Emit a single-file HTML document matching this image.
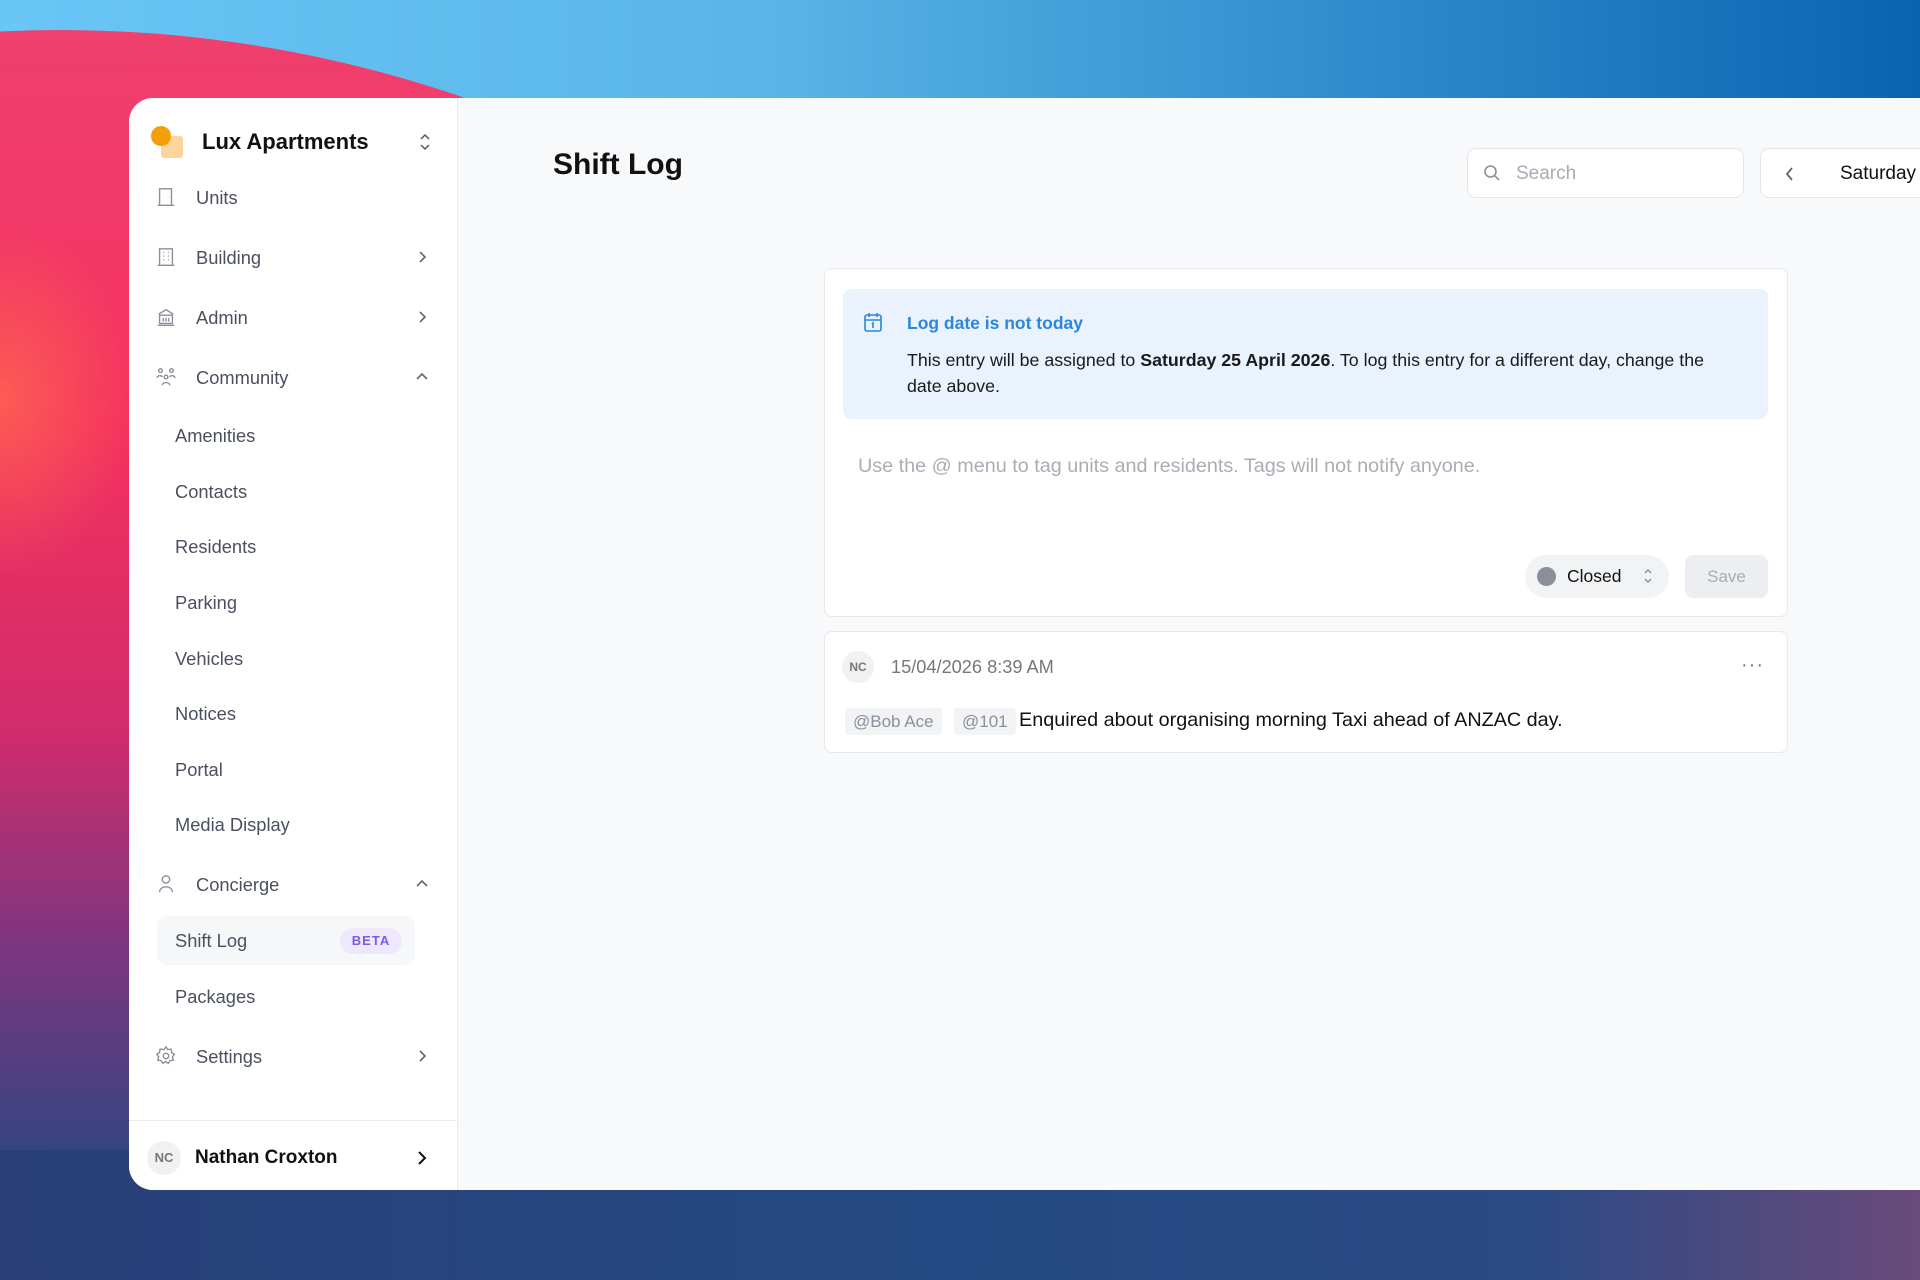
<!DOCTYPE html>
<html><head><meta charset="utf-8"><style>
*{box-sizing:border-box;margin:0;padding:0}
html,body{width:1920px;height:1280px;overflow:hidden}
body{position:relative;font-family:"Liberation Sans",sans-serif;background:#5ab4e8}
.bg{position:absolute;left:0;top:0;width:1920px;height:1280px;display:block}
.win{position:absolute;left:129px;top:98px;width:1791px;height:1092px;background:#f8f9fb;border-radius:24px 0 0 24px;overflow:hidden}
.side{position:absolute;left:0;top:0;width:329px;height:100%;background:#fff;border-right:1px solid #e8eaee}
.logo1{position:absolute;left:22px;top:28px;width:20px;height:20px;border-radius:50%;background:#f59e0b;z-index:2}
.logo2{position:absolute;left:32px;top:38px;width:22px;height:22px;border-radius:3px;background:#fdd49a}
.brand{position:absolute;left:73px;top:31px;font-size:22px;font-weight:600;color:#111}
.item{position:absolute;left:0;font-size:18.3px;color:#4b5060;line-height:20px}
.item .t{position:absolute;left:67px;top:1px;white-space:nowrap}
.sub .t{left:46px}
.ic{position:absolute;left:26px;top:-1px;width:22px;height:22px}
.chev{position:absolute;left:284px;top:0;width:18px;height:20px}
.hl{position:absolute;left:28px;top:818px;width:258px;height:49px;background:#f6f7f9;border-radius:10px}
.beta{position:absolute;left:211px;top:830px;width:62px;height:26px;border-radius:13px;background:#ede8fd;color:#7c5ce6;font-size:13px;font-weight:700;letter-spacing:1px;text-align:center;line-height:26px}
.foot{position:absolute;left:0;top:1022px;width:329px;border-top:1px solid #ececef}
.av{position:absolute;border-radius:50%;background:#f1f1f3;color:#777;font-weight:700;text-align:center}
.title{position:absolute;left:424px;top:50px;font-size:30px;font-weight:700;color:#111}
.search{position:absolute;left:1338px;top:50px;width:277px;height:50px;background:#fff;border:1px solid #e3e5e9;border-radius:9px}
.search span{position:absolute;left:48px;top:14px;font-size:19px;color:#a6abb5}
.date{position:absolute;left:1631px;top:50px;width:160px;height:50px;background:#fff;border:1px solid #e3e5e9;border-right:none;border-radius:9px 0 0 9px;overflow:hidden}
.date span{position:absolute;left:79px;top:14px;font-size:19px;color:#111;white-space:nowrap}
.card{position:absolute;left:695px;width:964px;background:#fff;border:1px solid #e6e8ec;border-radius:8px}
.alert{position:absolute;left:18px;top:20px;width:925px;height:130px;background:#eaf2fd;border-radius:8px}
.atitle{position:absolute;left:64px;top:24px;font-size:17.5px;font-weight:700;color:#2a86de}
.abody{position:absolute;left:64px;top:58px;width:830px;font-size:17.8px;line-height:26px;color:#1a1a1a}
.ph{position:absolute;left:33px;top:186px;font-size:19.8px;color:#a9adb5}
.closed{position:absolute;left:700px;top:286px;width:144px;height:43px;border-radius:22px;background:#f2f3f5}
.save{position:absolute;left:860px;top:286px;width:83px;height:43px;border-radius:8px;background:#eceef1;color:#a9adb5;font-size:17px;text-align:center;line-height:43px}
.tag{position:absolute;top:76px;height:27px;background:#f2f3f5;border-radius:4px;color:#8a8f99;font-size:17px;line-height:27px;padding:0 8px}
</style></head><body>
<svg class="bg" width="1920" height="1280" viewBox="0 0 1920 1280">
 <defs>
  <linearGradient id="sky" x1="0" y1="0" x2="1" y2="0"><stop offset="0" stop-color="#6ac6f7"/><stop offset=".4" stop-color="#5ab4e8"/><stop offset=".75" stop-color="#2a86c8"/><stop offset="1" stop-color="#0b63b0"/></linearGradient>
  <linearGradient id="pk" x1="0" y1="0" x2="0" y2="1"><stop offset="0" stop-color="#f0406e"/><stop offset=".18" stop-color="#f5305e"/><stop offset=".32" stop-color="#d02c6c"/><stop offset=".42" stop-color="#7a3680"/><stop offset=".52" stop-color="#2e4680"/></linearGradient>
  <radialGradient id="gl"><stop offset="0" stop-color="#ff6e50" stop-opacity=".7"/><stop offset=".7" stop-color="#ff6e50" stop-opacity="0"/></radialGradient>
  <linearGradient id="bt" x1="0" y1="0" x2="1" y2="0"><stop offset="0" stop-color="#2a3f78"/><stop offset=".5" stop-color="#234a82"/><stop offset=".8" stop-color="#2c4a84"/><stop offset="1" stop-color="#6a4a7a"/></linearGradient>
 </defs>
 <rect width="1920" height="1280" fill="url(#sky)"/>
 <ellipse cx="60" cy="1130" rx="1170" ry="1100" fill="url(#pk)"/>
 <ellipse cx="0" cy="400" rx="200" ry="250" fill="url(#gl)"/>
 <rect x="0" y="1150" width="1920" height="130" fill="url(#bt)"/>
</svg>
<div class="win">
 <div class="side">
  <div class="logo1"></div><div class="logo2"></div>
  <div class="brand">Lux Apartments</div>
  <svg style="position:absolute;left:290px;top:35px" width="12" height="18" viewBox="0 0 12 18" fill="none" stroke="#555" stroke-width="1.5"><path d="M2 6l4-4 4 4M2 12l4 4 4-4"/></svg>

  <div class="item" style="top:89px"><svg class="ic" viewBox="0 0 24 24" fill="none" stroke="#8a8f99" stroke-width="1.5"><path d="M5 21V3h13v18M3 21h18M14 12h.5"/></svg><span class="t">Units</span></div>
  <div class="item" style="top:149px"><svg class="ic" viewBox="0 0 24 24" fill="none" stroke="#8a8f99" stroke-width="1.5"><path d="M5 21V3h14v18M3 21h18M9 7h1M14 7h1M9 11h1M14 11h1M9 15h1M14 15h1"/></svg><span class="t">Building</span><svg class="chev" viewBox="0 0 18 20" fill="none" stroke="#666" stroke-width="1.6"><path d="M7 5l5 5-5 5"/></svg></div>
  <div class="item" style="top:209px"><svg class="ic" viewBox="0 0 24 24" fill="none" stroke="#8a8f99" stroke-width="1.5"><path d="M3 21h18M4 9l8-5 8 5M5 10h14v9H5zM9 13v4M12 13v4M15 13v4"/></svg><span class="t">Admin</span><svg class="chev" viewBox="0 0 18 20" fill="none" stroke="#666" stroke-width="1.6"><path d="M7 5l5 5-5 5"/></svg></div>
  <div class="item" style="top:269px"><svg class="ic" viewBox="0 0 24 24" fill="none" stroke="#8a8f99" stroke-width="1.5"><circle cx="6" cy="5" r="2"/><circle cx="18" cy="5" r="2"/><circle cx="12" cy="12" r="2"/><path d="M2 13c1-3 5-3 6-1M22 13c-1-3-5-3-6-1M8 21c0-4 8-4 8 0"/></svg><span class="t">Community</span><svg class="chev" viewBox="0 0 18 20" fill="none" stroke="#666" stroke-width="1.6"><path d="M4 12l5-5 5 5"/></svg></div>
  <div class="item sub" style="top:327px"><span class="t">Amenities</span></div>
  <div class="item sub" style="top:383px"><span class="t">Contacts</span></div>
  <div class="item sub" style="top:438px"><span class="t">Residents</span></div>
  <div class="item sub" style="top:494px"><span class="t">Parking</span></div>
  <div class="item sub" style="top:550px"><span class="t">Vehicles</span></div>
  <div class="item sub" style="top:605px"><span class="t">Notices</span></div>
  <div class="item sub" style="top:661px"><span class="t">Portal</span></div>
  <div class="item sub" style="top:716px"><span class="t">Media Display</span></div>
  <div class="item" style="top:776px"><svg class="ic" viewBox="0 0 24 24" fill="none" stroke="#8a8f99" stroke-width="1.5"><circle cx="12" cy="7" r="4"/><path d="M5 21c0-8 14-8 14 0"/></svg><span class="t">Concierge</span><svg class="chev" viewBox="0 0 18 20" fill="none" stroke="#666" stroke-width="1.6"><path d="M4 12l5-5 5 5"/></svg></div>
  <div class="hl"></div>
  <div class="item sub" style="top:832px"><span class="t">Shift Log</span></div>
  <div class="beta">BETA</div>
  <div class="item sub" style="top:888px"><span class="t">Packages</span></div>
  <div class="item" style="top:948px"><svg class="ic" viewBox="0 0 24 24" fill="none" stroke="#8a8f99" stroke-width="1.5"><circle cx="12" cy="12" r="3"/><path d="M12 2l2 3 3.5-.5.5 3.5 3 2-2 3 1 3.5-3.5.5-2 3-3-2-3 2-2-3-3.5-.5 1-3.5-2-3 3-2 .5-3.5L10 5z"/></svg><span class="t">Settings</span><svg class="chev" viewBox="0 0 18 20" fill="none" stroke="#666" stroke-width="1.6"><path d="M7 5l5 5-5 5"/></svg></div>
  <div class="foot"></div>
  <div class="av" style="left:18px;top:1043px;width:34px;height:34px;line-height:34px;font-size:13px">NC</div>
  <div style="position:absolute;left:66px;top:1049px;font-size:19px;font-weight:600;color:#111">Nathan Croxton</div>
  <svg style="position:absolute;left:286px;top:1050px" width="14" height="20" viewBox="0 0 14 20" fill="none" stroke="#111" stroke-width="2"><path d="M4 4l6 6-6 6"/></svg>
 </div>

 <div class="title">Shift Log</div>
 <div class="search"><svg style="position:absolute;left:15px;top:15px" width="18" height="18" viewBox="0 0 18 18" fill="none" stroke="#8a8f99" stroke-width="1.6"><circle cx="7.5" cy="7.5" r="5.5"/><path d="M12 12l4 4"/></svg><span>Search</span></div>
 <div class="date"><svg style="position:absolute;left:22px;top:15px" width="14" height="20" viewBox="0 0 14 20" fill="none" stroke="#666" stroke-width="1.8"><path d="M9 4l-5 6 5 6"/></svg><span>Saturday</span></div>

 <div class="card" style="top:170px;height:349px">
  <div class="alert">
   <svg style="position:absolute;left:20px;top:22px" width="20" height="22" viewBox="0 0 20 22" fill="none" stroke="#2a86de" stroke-width="1.6"><rect x="2" y="4" width="16" height="16" rx="2"/><path d="M2 9h16M6 2v4M14 2v4M9 13l1-1v5"/></svg>
   <div class="atitle">Log date is not today</div>
   <div class="abody">This entry will be assigned to <b>Saturday 25 April 2026</b>. To log this entry for a different day, change the date above.</div>
  </div>
  <div class="ph">Use the @ menu to tag units and residents. Tags will not notify anyone.</div>
  <div class="closed"><div style="position:absolute;left:12px;top:12px;width:19px;height:19px;border-radius:50%;background:#8a8f99"></div><span style="position:absolute;left:42px;top:11px;font-size:17.5px;color:#111">Closed</span><svg style="position:absolute;left:118px;top:13px" width="10" height="16" viewBox="0 0 10 16" fill="none" stroke="#888" stroke-width="1.3"><path d="M2 5l3-3 3 3M2 11l3 3 3-3"/></svg></div>
  <div class="save">Save</div>
 </div>

 <div class="card" style="top:533px;height:122px">
  <div class="av" style="left:17px;top:19px;width:32px;height:32px;line-height:32px;font-size:12px">NC</div>
  <div style="position:absolute;left:66px;top:25px;font-size:18.2px;color:#777">15/04/2026 8:39 AM</div>
  <div style="position:absolute;left:916px;top:22px;font-size:20px;color:#777;letter-spacing:1px">···</div>
  <div class="tag" style="left:20px">@Bob Ace</div>
  <div class="tag" style="left:129px">@101</div>
  <div style="position:absolute;left:194px;top:77px;font-size:19.8px;color:#111">Enquired about organising morning Taxi ahead of ANZAC day.</div>
 </div>
</div>
</body></html>
